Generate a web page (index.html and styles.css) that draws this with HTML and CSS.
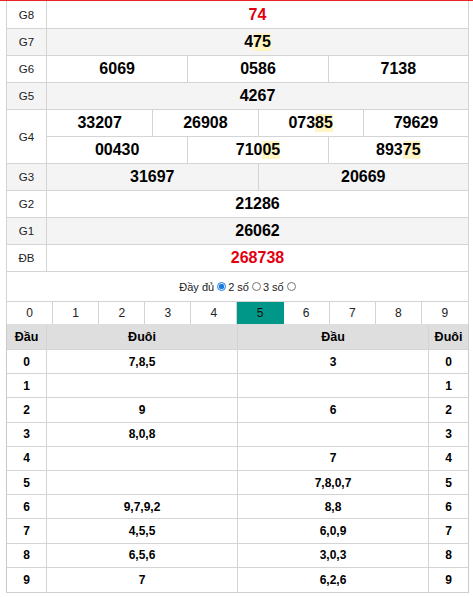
FILE: index.html
```html
<!DOCTYPE html>
<html lang="vi">
<head>
<meta charset="utf-8">
<title>Kết quả</title>
<link rel="stylesheet" href="styles.css">
</head>
<body>
<div class="topline"></div>
<div class="box">
  <div class="prizes">
    <div class="row">
      <div class="lbl">G8</div>
      <div class="vals"><div class="cell red">74</div></div>
    </div>
    <div class="row alt">
      <div class="lbl">G7</div>
      <div class="vals"><div class="cell">4<span class="hl">75</span></div></div>
    </div>
    <div class="row">
      <div class="lbl">G6</div>
      <div class="vals"><div class="cell">6069</div><div class="cell">0586</div><div class="cell">7138</div></div>
    </div>
    <div class="row alt">
      <div class="lbl">G5</div>
      <div class="vals"><div class="cell">4267</div></div>
    </div>
    <div class="row double">
      <div class="lbl">G4</div>
      <div class="stack">
        <div class="vals sub"><div class="cell">33207</div><div class="cell">26908</div><div class="cell">073<span class="hl">85</span></div><div class="cell">79629</div></div>
        <div class="vals"><div class="cell">00430</div><div class="cell">710<span class="hl">05</span></div><div class="cell">893<span class="hl">75</span></div></div>
      </div>
    </div>
    <div class="row alt">
      <div class="lbl">G3</div>
      <div class="vals"><div class="cell">31697</div><div class="cell">20669</div></div>
    </div>
    <div class="row">
      <div class="lbl">G2</div>
      <div class="vals"><div class="cell">21286</div></div>
    </div>
    <div class="row alt">
      <div class="lbl">G1</div>
      <div class="vals"><div class="cell">26062</div></div>
    </div>
    <div class="row">
      <div class="lbl">ĐB</div>
      <div class="vals"><div class="cell red">268738</div></div>
    </div>
  </div>

  <div class="radios">
    <label class="opt">Đầy đủ<input type="radio" name="n" checked></label>
    <label class="opt">2 số<input type="radio" name="n"></label>
    <label class="opt">3 số<input type="radio" name="n"></label>
  </div>

  <div class="tabs">
    <div class="tab">0</div><div class="tab">1</div><div class="tab">2</div><div class="tab">3</div><div class="tab">4</div>
    <div class="tab active">5</div><div class="tab">6</div><div class="tab">7</div><div class="tab">8</div><div class="tab">9</div>
  </div>

  <div class="loto">
    <div class="lrow head"><div class="lc">Đầu</div><div class="lc">Đuôi</div><div class="lc">Đầu</div><div class="lc">Đuôi</div></div>
    <div class="lrow"><div class="lc">0</div><div class="lc">7,8,5</div><div class="lc">3</div><div class="lc">0</div></div>
    <div class="lrow"><div class="lc">1</div><div class="lc"></div><div class="lc"></div><div class="lc">1</div></div>
    <div class="lrow"><div class="lc">2</div><div class="lc">9</div><div class="lc">6</div><div class="lc">2</div></div>
    <div class="lrow"><div class="lc">3</div><div class="lc">8,0,8</div><div class="lc"></div><div class="lc">3</div></div>
    <div class="lrow"><div class="lc">4</div><div class="lc"></div><div class="lc">7</div><div class="lc">4</div></div>
    <div class="lrow"><div class="lc">5</div><div class="lc"></div><div class="lc">7,8,0,7</div><div class="lc">5</div></div>
    <div class="lrow"><div class="lc">6</div><div class="lc">9,7,9,2</div><div class="lc">8,8</div><div class="lc">6</div></div>
    <div class="lrow"><div class="lc">7</div><div class="lc">4,5,5</div><div class="lc">6,0,9</div><div class="lc">7</div></div>
    <div class="lrow"><div class="lc">8</div><div class="lc">6,5,6</div><div class="lc">3,0,3</div><div class="lc">8</div></div>
    <div class="lrow"><div class="lc">9</div><div class="lc">7</div><div class="lc">6,2,6</div><div class="lc">9</div></div>
  </div>
</div>
</body>
</html>
```

FILE: styles.css
```css
* { box-sizing: border-box; }
html, body { margin: 0; padding: 0; background: #fff; }
body {
  font-family: "Liberation Sans", Arial, sans-serif;
  color: #000;
}
.topline { height: 1px; background: #e8232a; }
.box {
  margin-left: 6px;
  width: 463px;
  border-left: 1px solid #d4d4d4;
  border-right: 1px solid #d4d4d4;
}
.row {
  display: flex;
  height: 27px;
  border-bottom: 1px solid #d4d4d4;
}
.row:first-child { height: 28px; }
.row.double { height: 54px; }
.row.alt { background: #f4f4f4; }
.lbl {
  flex: none;
  width: 40px;
  border-right: 1px solid #d4d4d4;
  display: flex;
  align-items: center;
  justify-content: center;
  font-size: 11.5px;
  color: #222;
}
.stack { flex: 1; display: flex; flex-direction: column; }
.vals {
  flex: 1;
  display: grid;
  grid-auto-flow: column;
  grid-auto-columns: 1fr;
}
.vals.sub { border-bottom: 1px solid #d4d4d4; }
.cell {
  display: flex;
  align-items: center;
  justify-content: center;
  font-size: 16px;
  font-weight: bold;
}
.cell + .cell { border-left: 1px solid #d4d4d4; }
.red { color: #e3000f; }
.hl { background: #fff5c4; }

.radios {
  height: 29px;
  display: flex;
  align-items: center;
  justify-content: center;
  font-size: 11px;
  color: #222;
  padding-left: 2px;
}
.opt { display: inline-flex; align-items: center; }
.opt input {
  width: 9px;
  height: 9px;
  margin: 0 2px 0 3px;
  accent-color: #1a7be0;
}

.tabs {
  display: grid;
  grid-template-columns: repeat(10, 1fr);
  border-top: 1px solid #d4d4d4;
  height: 23px;
}
.tab {
  display: flex;
  align-items: center;
  justify-content: center;
  font-size: 12px;
  color: #222;
  border-right: 1px solid #d4d4d4;
}
.tab:last-child { border-right: 0; }
.tab.active { background: #009688; color: #111; border-right-color: #009688; }

.loto {
  border-bottom: 1px solid #cfcfcf;
  box-shadow: 0 1px 2px rgba(0,0,0,0.12);
}
.lrow {
  display: grid;
  grid-template-columns: 40px 191px 191px 1fr;
  height: 24.2px;
  border-bottom: 1px solid #d4d4d4;
}
.lrow:last-child { border-bottom: 0; }
.lrow.head { height: 26px; background: #dedede; }
.lc {
  display: flex;
  align-items: center;
  justify-content: center;
  font-size: 12px;
  font-weight: bold;
  border-right: 1px solid #d4d4d4;
}
.lc:last-child { border-right: 0; }
.head .lc { font-size: 12.5px; }
```
